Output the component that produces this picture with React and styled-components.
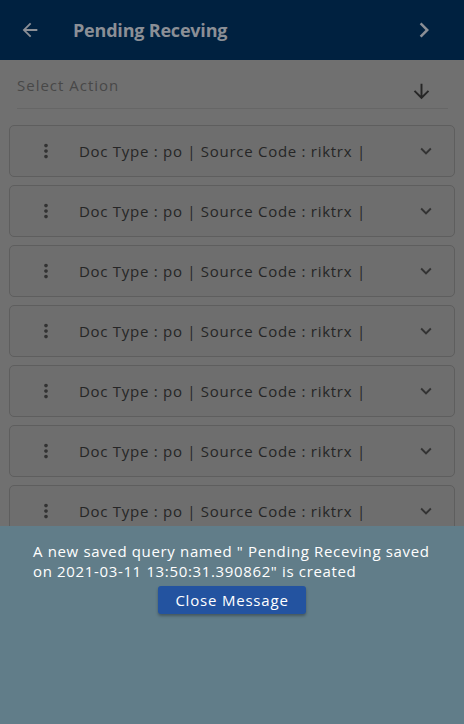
import React from 'react';
import styled, { createGlobalStyle } from 'styled-components';
import { MdArrowBack, MdChevronRight, MdArrowDownward, MdMoreVert, MdKeyboardArrowDown } from 'react-icons/md';

const GlobalStyle = createGlobalStyle`
    body {
        margin: 0;
        font-family: "Open Sans", "Noto Sans", sans-serif;
    }
`

const Page = styled.div`
    position: relative;
    width: 464px;
    height: 724px;
    overflow: hidden;
    background-color: #707070;
`

const Header = styled.div`
    display: flex;
    align-items: center;
    height: 60px;
    background-color: #002140;
    color: #8b8f96;
`

const HeaderBtn = styled.div`
    display: flex;
    align-items: center;
    justify-content: center;
    width: 60px;
    height: 60px;
    font-size: ${p => p.$size || 22}px;
    margin-right: ${p => p.$right || 0}px;
`

const Title = styled.h1`
    flex: 1;
    margin: 0 0 0 13px;
    font-size: 18px;
    font-weight: 700;
    letter-spacing: -0.2px;
`

const SelectRow = styled.div`
    display: flex;
    align-items: flex-end;
    justify-content: space-between;
    margin: 0 16px 0 17px;
    height: 48px;
    border-bottom: 1px solid #666;
    color: #484848;
    span {
        align-self: flex-start;
        margin-top: 15px;
        font-size: 15px;
        letter-spacing: 1px;
    }
    svg {
        font-size: 23px;
        color: #262626;
        margin: 0 15px 5px 0;
    }
`

const List = styled.div`
    display: flex;
    flex-direction: column;
    gap: 8px;
    padding: 16px 9px;
`

const Card = styled.div`
    display: flex;
    align-items: center;
    height: 50px;
    border: 1px solid #5e5e5e;
    border-radius: 5px;
    background-color: #6e6e6e;
    color: #262626;
`

const Kebab = styled.div`
    display: flex;
    justify-content: center;
    box-sizing: border-box;
    width: 69px;
    padding-left: 3px;
    font-size: 22px;
    color: #333;
`

const CardText = styled.span`
    flex: 1;
    font-size: 15px;
    letter-spacing: 0.72px;
`

const Chevron = styled.div`
    display: flex;
    width: 39px;
    font-size: 22px;
    color: #333;
`

const Sheet = styled.div`
    position: absolute;
    left: 0;
    right: 0;
    bottom: 0;
    height: 198px;
    background-color: #617d89;
    display: flex;
    flex-direction: column;
    align-items: center;
    padding-top: 15px;
    box-sizing: border-box;
`

const Message = styled.p`
    margin: 0;
    padding: 0 16px 0 33px;
    align-self: stretch;
    color: #fff;
    font-size: 15px;
    line-height: 20px;
    letter-spacing: 0.65px;
`

const CloseBtn = styled.button`
    margin-top: 5px;
    width: 148px;
    height: 28px;
    border: none;
    border-radius: 3px;
    background-color: #2353a0;
    color: #fff;
    font-family: inherit;
    font-size: 15px;
    letter-spacing: 0.8px;
    box-shadow: 0 2px 3px rgba(0, 0, 0, 0.3);
`

const rows = Array.from({ length: 7 })

export default function App() {
    return (
        <Page>
            <GlobalStyle />
            <Header>
                <HeaderBtn><MdArrowBack /></HeaderBtn>
                <Title>Pending Receving</Title>
                <HeaderBtn $size={30} $right={10}><MdChevronRight /></HeaderBtn>
            </Header>
            <SelectRow>
                <span>Select Action</span>
                <MdArrowDownward />
            </SelectRow>
            <List>
                {rows.map((_, i) => (
                    <Card key={i}>
                        <Kebab><MdMoreVert /></Kebab>
                        <CardText>Doc Type : po | Source Code : riktrx |</CardText>
                        <Chevron><MdKeyboardArrowDown /></Chevron>
                    </Card>
                ))}
            </List>
            <Sheet>
                <Message>
                    A new saved query named " Pending Receving saved on 2021-03-11 13:50:31.390862" is created
                </Message>
                <CloseBtn>Close Message</CloseBtn>
            </Sheet>
        </Page>
    );
}
